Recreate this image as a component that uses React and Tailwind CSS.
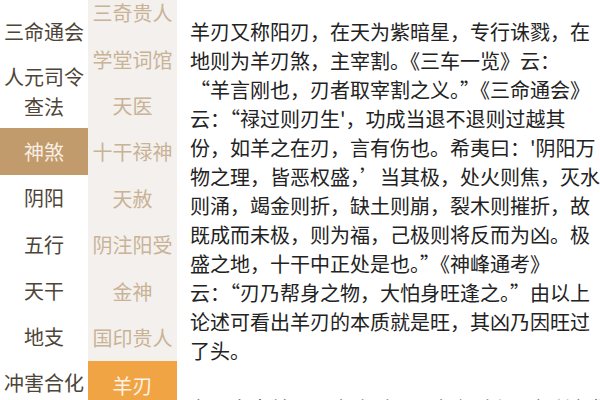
import React from "react";

const leftItems = [
	{ label: ["三命通会"], h: "h-[46px]" },
	{ label: ["人元司令", "查法"], h: "h-[73px]" },
	{ label: ["神煞"], h: "h-[47px]", active: true },
	{ label: ["阴阳"], h: "h-[46px]" },
	{ label: ["五行"], h: "h-[47px]" },
	{ label: ["天干"], h: "h-[46px]" },
	{ label: ["地支"], h: "h-[46px]" },
	{ label: ["冲害合化"], h: "h-[46px]" },
];

const midItems = ["三奇贵人", "学堂词馆", "天医", "十干禄神", "天赦", "阴注阳受", "金神", "国印贵人", "羊刃"];

const lines = [
	"羊刃又称阳刃，在天为紫暗星，专行诛戮，在",
	"地则为羊刃煞，主宰割。《三车一览》云：",
	"“羊言刚也，刃者取宰割之义。”《三命通会》",
	"云：“禄过则刃生'，功成当退不退则过越其",
	"份，如羊之在刃，言有伤也。希夷曰：'阴阳万",
	"物之理，皆恶权盛，’当其极，处火则焦，灭水",
	"则涌，竭金则折，缺土则崩，裂木则摧折，故",
	"既成而未极，则为福，己极则将反而为凶。极",
	"盛之地，十干中正处是也。”《神峰通考》",
	"云：“刃乃帮身之物，大怕身旺逢之。”由以上",
	"论述可看出羊刃的本质就是旺，其凶乃因旺过",
	"了头。",
];

const font = { fontFamily: '"Noto Sans CJK SC", "Noto Sans", sans-serif' };

export default function App() {
	return (
		<div className="flex w-[600px] h-[400px] overflow-hidden bg-white" style={font}>
			{/* first level menu */}
			<div className="w-[88px] shrink-0 flex flex-col pt-[9px] bg-white">
				{leftItems.map((item, i) => (
					<div
						key={i}
						className={`${item.h} shrink-0 flex flex-col items-center justify-center text-[20px] leading-[30px] ${item.active ? "bg-[#c19b6c] text-[#f7efe3]" : "text-[#4d4537]"}`}
					>
						{item.label.map((l, j) => (
							<span key={j}>{l}</span>
						))}
					</div>
				))}
			</div>

			{/* second level menu */}
			<div className="w-[89px] shrink-0 flex flex-col bg-[#f4f0ed] -mt-[10px]">
				{midItems.map((m, i) => (
					<div
						key={i}
						className={`h-[46.4px] shrink-0 flex items-center justify-center text-[20px] ${i == midItems.length - 1 ? "bg-[#f1a443] text-[#fdf3e4] h-[50px]" : "text-[#c8b397]"}`}
					>
						{m}
					</div>
				))}
			</div>

			{/* article */}
			<div className="flex-1 pl-[13px] pt-[17px] text-[20px] leading-[29px] text-[#222]">
				{lines.map((l, i) => (
					<div key={i} className="whitespace-nowrap">{l}</div>
				))}
				<div className="whitespace-nowrap mt-[29px]">在八字中羊刃，逢冲则凶，逢合则吉，有利有弊</div>
			</div>
		</div>
	);
}
